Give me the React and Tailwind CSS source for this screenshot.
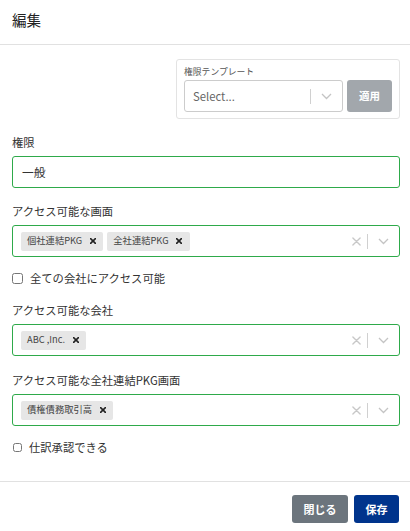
import { useState } from "react";

const font = "font-['Noto_Sans_CJK_JP','Noto_Sans',sans-serif]";

const Cross = ({ size = 9, stroke = 1.6, className = "" }) => (
    <svg width={size} height={size} viewBox="0 0 10 10" className={className}>
        <path d="M1 1L9 9M9 1L1 9" stroke="currentColor" strokeWidth={stroke} strokeLinecap="round" />
    </svg>
);

const Chevron = () => (
    <svg width="11" height="7" viewBox="0 0 11 7" className="text-[#c4c4c4]">
        <path d="M1 1l4.5 4.5L10 1" fill="none" stroke="currentColor" strokeWidth="1.3" />
    </svg>
);

const Tag = ({ label }) => (
    <div className="flex items-center h-[19px] bg-[#e6e6e6] rounded-[2px] mr-[4px]">
        <span className="pl-[6px] text-[9.3px] text-[#444]">{label}</span>
        <span className="w-[21px] flex justify-center text-[#222]">
            <Cross size={6} stroke={2.6} />
        </span>
    </div>
);

const MultiSelect = ({ values }) => (
    <div className="flex items-center h-[32px] border border-[#2eaa4a] rounded-[3px] pl-[8px]">
        <div className="flex flex-1 items-center">
            {values.map((v) => (
                <Tag key={v} label={v} />
            ))}
        </div>
        <div className="flex items-center h-full">
            <span className="w-[22px] flex justify-center text-[#c8c8c8]">
                <Cross size={9} stroke={1.5} />
            </span>
            <span className="w-px h-[15px] bg-[#d0d0d0]" />
            <span className="w-[31px] flex justify-center">
                <Chevron />
            </span>
        </div>
    </div>
);

const Field = ({ label, mt = "mt-[15px]", children }) => (
    <div className={mt}>
        <div className="text-[11.3px] leading-[16px] text-[#333] mb-[6px]">{label}</div>
        {children}
    </div>
);

const Check = ({ label, small }) => {
    const [on, setOn] = useState(false);
    return (
        <label className="flex items-center gap-[7px] leading-[16px] text-[11.3px] text-[#333]">
            <input
                type="checkbox"
                checked={on}
                onChange={() => setOn(!on)}
                className={small ? "w-[9px] h-[9px] m-0 ml-[1px]" : "w-[11px] h-[11px] m-0"}
            />
            <span>{label}</span>
        </label>
    );
};

export default function App() {
    return (
        <div className={`${font} w-[410px] h-[531px] bg-white overflow-hidden`}>
            <div className="h-[45px] border-b border-[#e1e1e1] pl-3 flex items-center">
                <h1 className="text-[14.5px] text-[#222] -mt-[5px]">編集</h1>
            </div>

            <div className="pl-3 pr-[10px] pt-[14px] h-[437px] border-b border-[#e1e1e1]">
                <div className="ml-auto w-[224px] border border-[#e3e3e3] rounded-[3px] px-[7px] pt-[5px] pb-[6px]">
                    <div className="text-[8.8px] leading-[14px] text-[#555]">権限テンプレート</div>
                    <div className="flex items-center gap-[4px] mt-[1px]">
                        <div className="w-[160px] h-[32px] border border-[#cccccc] rounded-[3px] flex items-center">
                            <span className="flex-1 pl-[8px] text-[11.3px] text-[#666]">Select...</span>
                            <span className="w-px h-[15px] bg-[#d0d0d0]" />
                            <span className="w-[31px] flex justify-center">
                                <Chevron />
                            </span>
                        </div>
                        <button className="w-[45px] h-[32px] rounded-[3px] bg-[#a2a7ac] text-white text-[10.5px] font-bold">
                            適用
                        </button>
                    </div>
                </div>

                <Field label="権限">
                    <div className="h-[32px] border border-[#2eaa4a] rounded-[3px] flex items-center pl-[9px] text-[11.8px] text-[#333]">
                        一般
                    </div>
                </Field>

                <Field label="アクセス可能な画面">
                    <MultiSelect values={["個社連結PKG", "全社連結PKG"]} />
                </Field>

                <div className="mt-[13px]">
                    <Check label="全ての会社にアクセス可能" />
                </div>

                <Field label="アクセス可能な会社" mt="mt-[16px]">
                    <MultiSelect values={["ABC ,Inc."]} />
                </Field>

                <Field label="アクセス可能な全社連結PKG画面" mt="mt-[16px]">
                    <MultiSelect values={["債権債務取引高"]} />
                </Field>

                <div className="mt-[13px]">
                    <Check label="仕訳承認できる" small />
                </div>
            </div>

            <div className="flex justify-end gap-[6px] pr-[11px] pt-[13px]">
                <button className="w-[56px] h-[28px] rounded-[3px] bg-[#6c757d] text-white text-[11px] font-bold">
                    閉じる
                </button>
                <button className="w-[45px] h-[28px] rounded-[3px] bg-[#00348c] text-white text-[11px] font-bold">
                    保存
                </button>
            </div>
        </div>
    );
}
